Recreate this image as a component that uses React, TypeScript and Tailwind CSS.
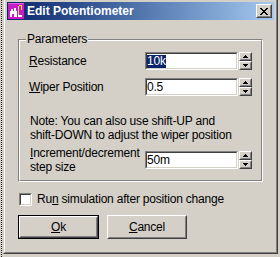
const sunkenOuter = "border border-t-[#808080] border-l-[#808080] border-r-white border-b-white";
const sunkenInner = "border border-t-[#404040] border-l-[#404040] border-r-[#d4d0c8] border-b-[#d4d0c8]";
const raisedOuter = "border border-t-white border-l-white border-r-[#404040] border-b-[#404040]";
const raisedInner = "border border-t-[#d4d0c8] border-l-[#d4d0c8] border-r-[#808080] border-b-[#808080]";

function SpinButton({ up }: { up?: boolean }) {
  return (
    <div className={`h-[9px] w-[13px] bg-[#d4d0c8] ${raisedOuter}`}>
      <div className={`h-full flex items-center justify-center ${raisedInner}`}>
        <svg width="5" height="3" viewBox="0 0 5 3" shapeRendering="crispEdges">
          {up ? (
            <g fill="#000">
              <rect x="2" y="0" width="1" height="1" />
              <rect x="1" y="1" width="3" height="1" />
              <rect x="0" y="2" width="5" height="1" />
            </g>
          ) : (
            <g fill="#000">
              <rect x="0" y="0" width="5" height="1" />
              <rect x="1" y="1" width="3" height="1" />
              <rect x="2" y="2" width="1" height="1" />
            </g>
          )}
        </svg>
      </div>
    </div>
  );
}

function SpinField({ children }: { children: React.ReactNode }) {
  return (
    <div className="flex items-center gap-px">
      <div className={`w-[93px] h-[18px] ${sunkenOuter}`}>
        <div className={`h-full bg-white flex items-center ${sunkenInner}`}>{children}</div>
      </div>
      <div className="flex flex-col">
        <SpinButton up />
        <SpinButton />
      </div>
    </div>
  );
}

function TitleIcon() {
  return (
    <svg width="16" height="16" viewBox="0 0 16 16" shapeRendering="crispEdges">
      <rect x="0" y="0" width="16" height="16" fill="#c81cc8" />
      <rect x="0" y="0" width="16" height="1" fill="#e060e0" />
      <rect x="2" y="8" width="7" height="6" fill="#fff" />
      <rect x="3" y="6" width="2" height="2" fill="#fff" />
      <rect x="6" y="5" width="2" height="3" fill="#fff" />
      <rect x="4" y="11" width="2" height="3" fill="#c81cc8" />
      <rect x="10" y="3" width="1" height="9" fill="#f0e040" />
      <rect x="11" y="2" width="3" height="1" fill="#f0e040" />
      <rect x="13" y="3" width="1" height="4" fill="#f0e040" />
      <rect x="10" y="12" width="4" height="2" fill="#fff" />
    </svg>
  );
}

export default function App() {
  return (
    <div className="w-[280px] h-[257px] bg-[#d4d0c8] flex overflow-hidden font-['Liberation_Sans',Arial,sans-serif] text-[12px] leading-[14px] tracking-[-0.2px] text-black">
      <div className="w-[3px] shrink-0 pl-px">
        <div className="h-full border-l border-dotted border-[#202020]" />
      </div>

      <div className="-mt-[2px] w-[275px] h-[256px] shrink-0 border border-t-[#d4d0c8] border-l-[#d4d0c8] border-r-[#404040] border-b-[#404040]">
        <div className="h-full p-[2px] border border-t-white border-l-white border-r-[#808080] border-b-[#808080] flex flex-col">
          {/* title bar */}
          <div className="h-[18px] flex items-center pl-px pr-[2px] bg-linear-to-r from-[#0a246a] to-[#a6caf0]">
            <TitleIcon />
            <span className="ml-[3px] text-white font-bold tracking-normal">Edit Potentiometer</span>
            <div className={`ml-auto w-[16px] h-[14px] bg-[#d4d0c8] ${raisedOuter}`}>
              <div className={`h-full flex items-center justify-center ${raisedInner}`}>
                <svg width="8" height="7" viewBox="0 0 8 7" shapeRendering="crispEdges">
                  <path d="M0 0h2v1h-2zM6 0h2v1h-2zM1 1h2v1h-2zM5 1h2v1h-2zM2 2h4v1h-4zM3 3h2v1h-2zM2 4h4v1h-4zM1 5h2v1h-2zM5 5h2v1h-2zM0 6h2v1h-2zM6 6h2v1h-2z" fill="#000" />
                </svg>
              </div>
            </div>
          </div>

          {/* body */}
          <div className="flex-1 px-[11px] pt-[19px]">
            <div className="relative border border-t-[#808080] border-l-[#808080] border-r-white border-b-white">
              <span className="absolute -top-[8px] left-[7px] bg-[#d4d0c8] px-[1px]">Parameters</span>
              <div className="border border-t-white border-l-white border-r-[#808080] border-b-[#808080] pl-[9px] pt-[11px] pb-[6px]">
                <div className="flex items-center">
                  <span className="w-[116px]">
                    <u>R</u>esistance
                  </span>
                  <SpinField>
                    <span className="bg-[#0a246a] text-white leading-[13px]">10k</span>
                  </SpinField>
                </div>
                <div className="flex items-center mt-[8px]">
                  <span className="w-[116px]">
                    <u>W</u>iper Position
                  </span>
                  <SpinField>
                    <span>0.5</span>
                  </SpinField>
                </div>
                <p className="mt-[18px] pl-px">
                  Note: You can also use shift-UP and
                  <br />
                  shift-DOWN to adjust the wiper position
                </p>
                <div className="flex items-center mt-[4px]">
                  <span className="w-[116px] pl-px">
                    <u>I</u>ncrement/decrement
                    <br />
                    step size
                  </span>
                  <SpinField>
                    <span>50m</span>
                  </SpinField>
                </div>
              </div>
            </div>

            <div className="flex items-center mt-[10px] ml-px">
              <div className={`w-[13px] h-[13px] ${sunkenOuter}`}>
                <div className={`h-full bg-white ${sunkenInner}`} />
              </div>
              <span className="ml-[5px]">
                Ru<u>n</u> simulation after position change
              </span>
            </div>

            <div className="flex mt-[9px] gap-[8px]">
              <div className="w-[81px] h-[24px] border border-black">
                <div className={`h-full ${raisedOuter}`}>
                  <div className={`h-full flex items-center justify-center ${raisedInner}`}>
                    <span>
                      <u>O</u>k
                    </span>
                  </div>
                </div>
              </div>
              <div className={`w-[80px] h-[24px] ${raisedOuter}`}>
                <div className={`h-full flex items-center justify-center ${raisedInner}`}>
                  <span>
                    <u>C</u>ancel
                  </span>
                </div>
              </div>
            </div>
          </div>
        </div>
      </div>
    </div>
  );
}
